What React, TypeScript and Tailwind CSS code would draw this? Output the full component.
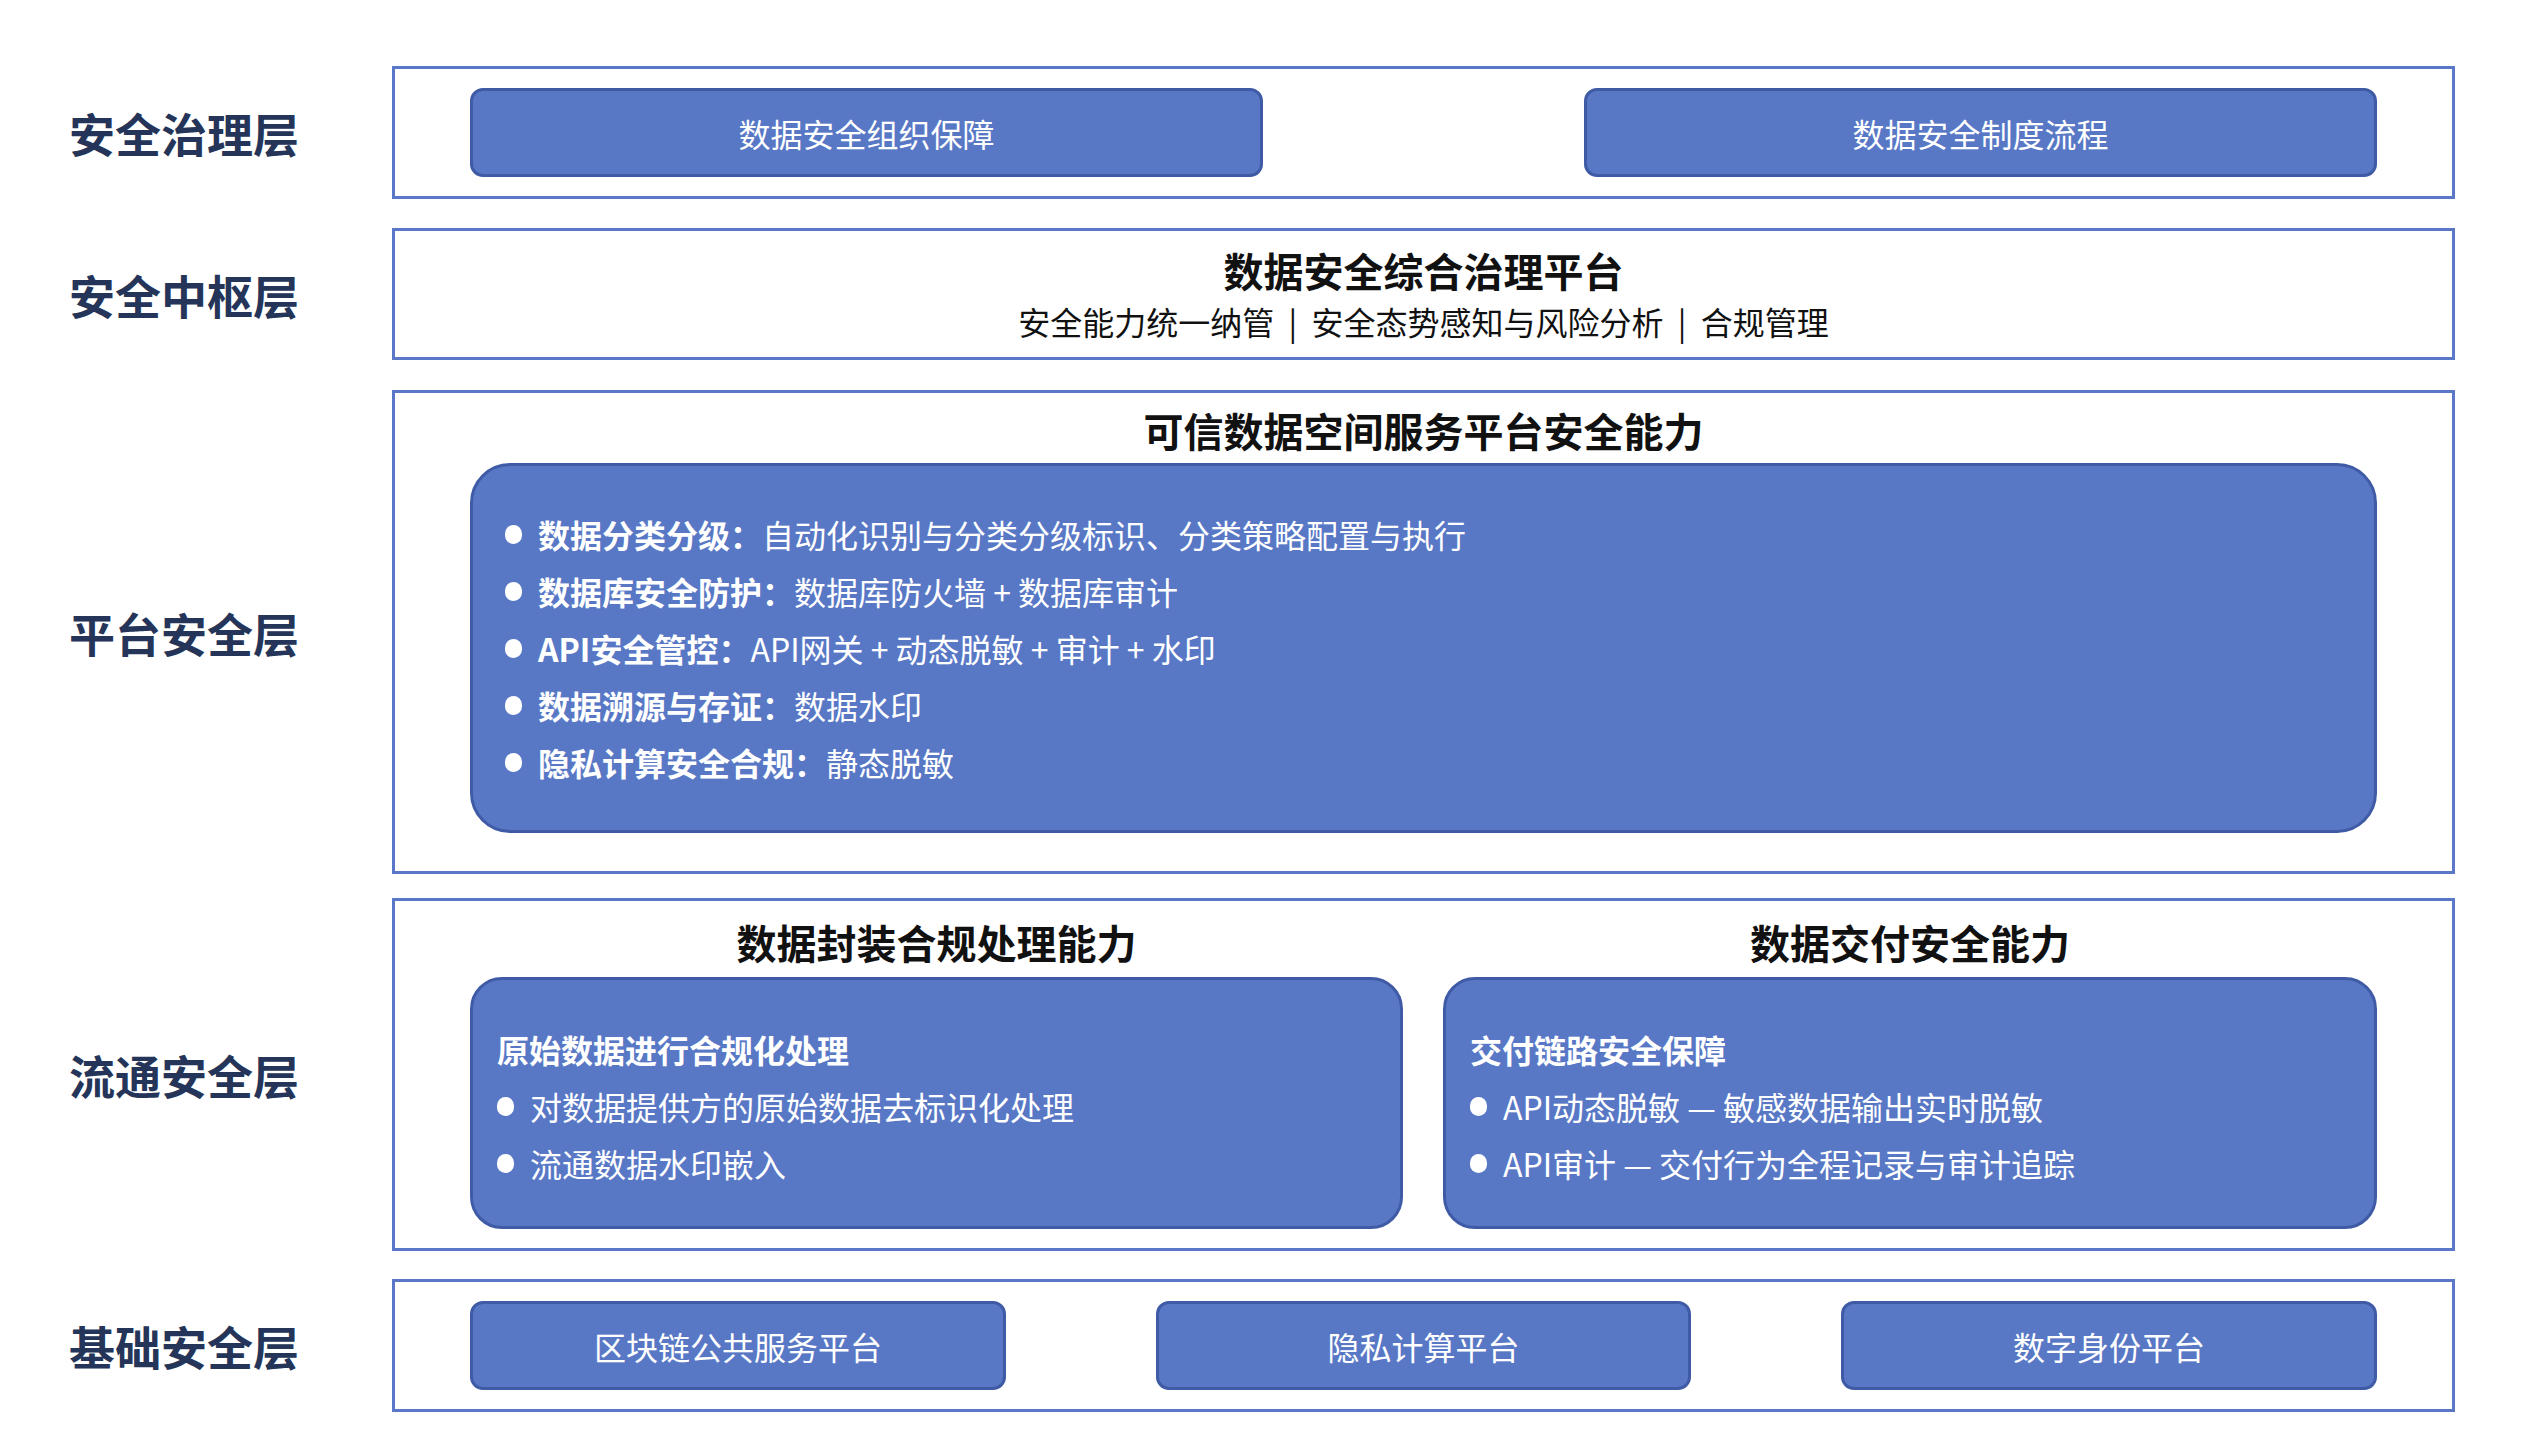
import React from "react";

const F = { fontFamily: '"Noto Sans CJK SC", "Noto Sans", sans-serif' };

function Label({ t }: { t: string }) {
  return (
    <div className="w-[392px] shrink-0 flex items-center pl-[69px] text-[46px] font-bold text-[#253559]">{t}</div>
  );
}

function Btn({ t, w }: { t: string; w: string }) {
  return (
    <div className={`${w} h-[89px] rounded-[13px] bg-[#5878c6] border-[3px] border-[#3f5ba6] flex items-center justify-center text-white text-[32px]`}>{t}</div>
  );
}

function Dot() {
  return <span className="inline-block w-[17px] h-[19px] rounded-full bg-white mr-[16px] shrink-0" />;
}

export default function App() {
  const items: [string, string][] = [
    ["数据分类分级：", "自动化识别与分类分级标识、分类策略配置与执行"],
    ["数据库安全防护：", "数据库防火墙 + 数据库审计"],
    ["API安全管控：", "API网关 + 动态脱敏 + 审计 + 水印"],
    ["数据溯源与存证：", "数据水印"],
    ["隐私计算安全合规：", "静态脱敏"],
  ];
  return (
    <div style={F} className="w-[2532px] h-[1456px] bg-white pt-[66px]">
      <div className="flex">
        <Label t="安全治理层" />
        <div className="w-[2063px] h-[133px] border-[3px] border-[#5b78c8] flex items-center justify-between px-[75px]">
          <Btn t="数据安全组织保障" w="w-[793px]" />
          <Btn t="数据安全制度流程" w="w-[793px]" />
        </div>
      </div>
      <div className="flex mt-[29px]">
        <Label t="安全中枢层" />
        <div className="w-[2063px] h-[132px] border-[3px] border-[#5b78c8] flex flex-col items-center justify-center">
          <div className="text-[40px] font-bold text-[#111] leading-[50px]">数据安全综合治理平台</div>
          <div className="text-[32px] text-[#111] leading-[44px] mt-[4px] whitespace-pre">安全能力统一纳管  |  安全态势感知与风险分析  |  合规管理</div>
        </div>
      </div>
      <div className="flex mt-[30px]">
        <Label t="平台安全层" />
        <div className="w-[2063px] h-[484px] border-[3px] border-[#5b78c8] px-[75px] pt-[12px]">
          <div className="text-center text-[40px] font-bold text-[#111] leading-[50px]">可信数据空间服务平台安全能力</div>
          <div className="mt-[8px] h-[370px] rounded-[40px] bg-[#5878c6] border-[3px] border-[#3f5ba6] pl-[32px] flex flex-col justify-center gap-[12px]">
            {items.map(([b, r]) => (
              <div key={b} className="flex items-center text-white text-[32px] leading-[45px]">
                <Dot />
                <span className="font-bold">{b}</span>
                <span>{r}</span>
              </div>
            ))}
          </div>
        </div>
      </div>
      <div className="flex mt-[24px]">
        <Label t="流通安全层" />
        <div className="w-[2063px] h-[353px] border-[3px] border-[#5b78c8] px-[75px] pt-[16px] flex justify-between">
          {[
            ["数据封装合规处理能力", "原始数据进行合规化处理", ["对数据提供方的原始数据去标识化处理", "流通数据水印嵌入"], "w-[933px]"],
            ["数据交付安全能力", "交付链路安全保障", ["API动态脱敏 — 敏感数据输出实时脱敏", "API审计 — 交付行为全程记录与审计追踪"], "w-[934px]"],
          ].map(([t, h, li, w]) => (
            <div key={t as string} className={w as string}>
              <div className="text-center text-[40px] font-bold text-[#111] leading-[50px]">{t as string}</div>
              <div className="mt-[10px] h-[252px] rounded-[32px] bg-[#5878c6] border-[3px] border-[#3f5ba6] pl-[24px] pt-[46px]">
                <div className="text-white font-bold text-[32px] leading-[46px]">{h as string}</div>
                {(li as string[]).map((x) => (
                  <div key={x} className="flex items-center text-white text-[32px] leading-[46px] mt-[11px]">
                    <Dot />
                    <span>{x}</span>
                  </div>
                ))}
              </div>
            </div>
          ))}
        </div>
      </div>
      <div className="flex mt-[28px]">
        <Label t="基础安全层" />
        <div className="w-[2063px] h-[133px] border-[3px] border-[#5b78c8] flex items-center justify-between px-[75px]">
          <Btn t="区块链公共服务平台" w="w-[536px]" />
          <Btn t="隐私计算平台" w="w-[535px]" />
          <Btn t="数字身份平台" w="w-[536px]" />
        </div>
      </div>
    </div>
  );
}
